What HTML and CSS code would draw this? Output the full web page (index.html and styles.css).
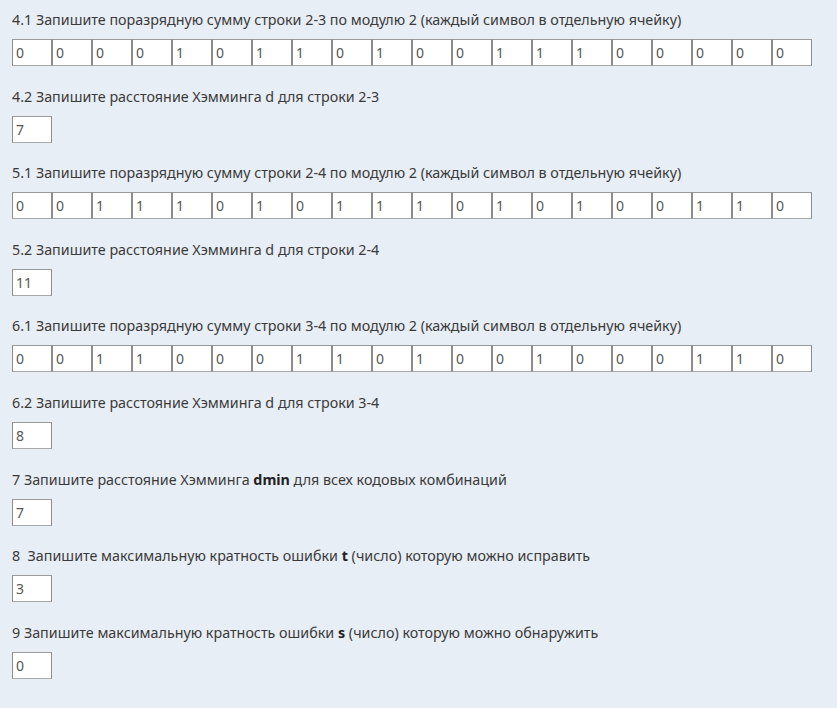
FILE: index.html
```html
<!DOCTYPE html>
<html lang="ru">
<head>
<meta charset="utf-8">
<link rel="stylesheet" href="styles.css">
</head>
<body>
<div class="page">
  <div class="q">
    <div class="label">4.1 Запишите поразрядную сумму строки 2-3 по модулю 2 (каждый символ в отдельную ячейку)</div>
    <div class="cells">
      <input class="cell" value="0"><input class="cell" value="0"><input class="cell" value="0"><input class="cell" value="0"><input class="cell" value="1"><input class="cell" value="0"><input class="cell" value="1"><input class="cell" value="1"><input class="cell" value="0"><input class="cell" value="1"><input class="cell" value="0"><input class="cell" value="0"><input class="cell" value="1"><input class="cell" value="1"><input class="cell" value="1"><input class="cell" value="0"><input class="cell" value="0"><input class="cell" value="0"><input class="cell" value="0"><input class="cell" value="0">
    </div>
  </div>
  <div class="q">
    <div class="label">4.2 Запишите расстояние Хэмминга d для строки 2-3</div>
    <div class="cells"><input class="cell" value="7"></div>
  </div>
  <div class="q">
    <div class="label">5.1 Запишите поразрядную сумму строки 2-4 по модулю 2 (каждый символ в отдельную ячейку)</div>
    <div class="cells">
      <input class="cell" value="0"><input class="cell" value="0"><input class="cell" value="1"><input class="cell" value="1"><input class="cell" value="1"><input class="cell" value="0"><input class="cell" value="1"><input class="cell" value="0"><input class="cell" value="1"><input class="cell" value="1"><input class="cell" value="1"><input class="cell" value="0"><input class="cell" value="1"><input class="cell" value="0"><input class="cell" value="1"><input class="cell" value="0"><input class="cell" value="0"><input class="cell" value="1"><input class="cell" value="1"><input class="cell" value="0">
    </div>
  </div>
  <div class="q">
    <div class="label">5.2 Запишите расстояние Хэмминга d для строки 2-4</div>
    <div class="cells"><input class="cell" value="11"></div>
  </div>
  <div class="q">
    <div class="label">6.1 Запишите поразрядную сумму строки 3-4 по модулю 2 (каждый символ в отдельную ячейку)</div>
    <div class="cells">
      <input class="cell" value="0"><input class="cell" value="0"><input class="cell" value="1"><input class="cell" value="1"><input class="cell" value="0"><input class="cell" value="0"><input class="cell" value="0"><input class="cell" value="1"><input class="cell" value="1"><input class="cell" value="0"><input class="cell" value="1"><input class="cell" value="0"><input class="cell" value="0"><input class="cell" value="1"><input class="cell" value="0"><input class="cell" value="0"><input class="cell" value="0"><input class="cell" value="1"><input class="cell" value="1"><input class="cell" value="0">
    </div>
  </div>
  <div class="q">
    <div class="label">6.2 Запишите расстояние Хэмминга d для строки 3-4</div>
    <div class="cells"><input class="cell" value="8"></div>
  </div>
  <div class="q">
    <div class="label">7 Запишите расстояние Хэмминга <b>dmin</b> для всех кодовых комбинаций</div>
    <div class="cells"><input class="cell" value="7"></div>
  </div>
  <div class="q">
    <div class="label">8&nbsp; Запишите максимальную кратность ошибки <b>t</b> (число) которую можно исправить</div>
    <div class="cells"><input class="cell" value="3"></div>
  </div>
  <div class="q">
    <div class="label">9 Запишите максимальную кратность ошибки <b>s</b> (число) которую можно обнаружить</div>
    <div class="cells"><input class="cell" value="0"></div>
  </div>
</div>
</body>
</html>
```
FILE: styles.css
```css
html, body {
  margin: 0;
  padding: 0;
  background: #e8eef5;
}
body {
  font-family: "Noto Sans", "Open Sans", "Liberation Sans", sans-serif;
  font-size: 14.3px;
  color: #3a3a3a;
}
.page {
  padding: 10px 12px 0 12px;
}
.q {
  margin-bottom: 20.5px;
}
.label {
  line-height: 19.5px;
  margin-bottom: 9.6px;
  white-space: nowrap;
}
.label b {
  font-weight: 700;
  color: #222;
}
.cells {
  display: flex;
}
.cell {
  box-sizing: border-box;
  width: 40px;
  height: 27px;
  margin: 0;
  padding: 0 0 0 3px;
  border: 1px solid #8c8c8c;
  border-top-color: #9a9a9a;
  border-bottom-color: #a8a8a8;
  background: #ffffff;
  font-family: "Noto Sans", "Open Sans", "Liberation Sans", sans-serif;
  font-size: 14px;
  color: #555;
  outline: none;
}
```
